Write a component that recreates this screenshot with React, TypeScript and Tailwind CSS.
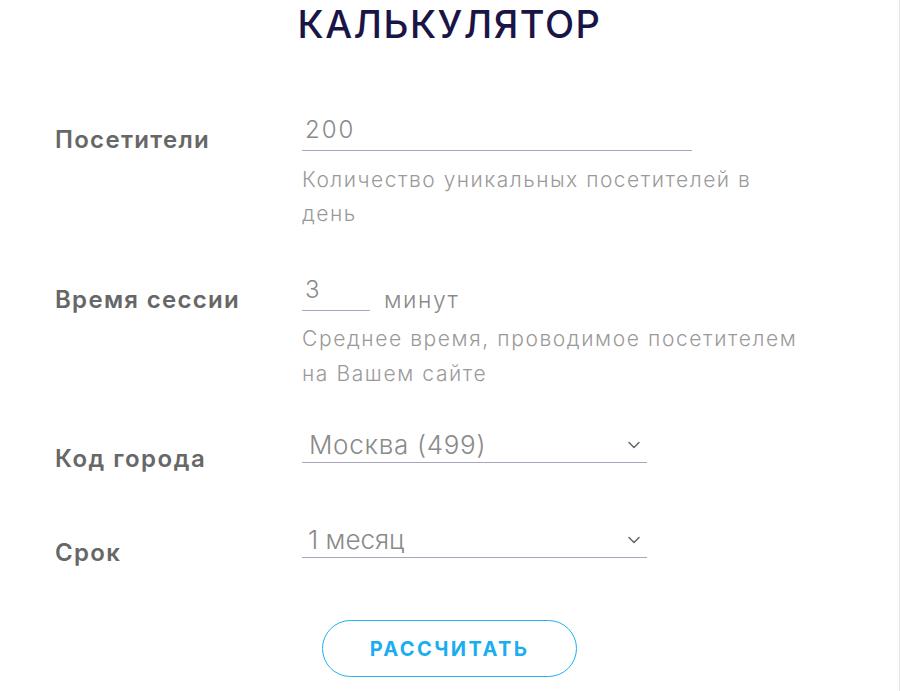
import React from 'react';
import { ChevronDown } from 'lucide-react';

const font = { fontFamily: 'Inter, "Noto Sans", sans-serif' };

const App: React.FC = () => {
  return (
    <div className="min-h-[691px] w-[900px] bg-white border-r border-[#e6e6e6]" style={font}>
      {/* Title */}
      <h1 className="text-center text-[38px] leading-[48px] font-medium tracking-[1.5px] text-[#1b1547]">
        КАЛЬКУЛЯТОР
      </h1>

      <div className="pl-[55px] pt-[62px]">
        {/* Посетители */}
        <div className="flex items-start">
          <div className="w-[247px] mt-[15px] text-[24px] leading-[30px] font-semibold tracking-[1.3px] text-[#676767]">
            Посетители
          </div>
          <div className="flex flex-col">
            <div className="w-[390px] h-[41px] border-b border-[#a9a5bd] text-[24px] leading-[40px] font-light tracking-[2px] text-[#8a8a8a] pl-[3px]">
              200
            </div>
            <p className="mt-[12px] w-[495px] text-[21px] leading-[34px] font-light tracking-[1.5px] text-[#9a9a9a]">
              Количество уникальных посетителей в день
            </p>
          </div>
        </div>

        {/* Время сессии */}
        <div className="flex items-start mt-[39px]">
          <div className="w-[247px] mt-[15px] text-[24px] leading-[30px] font-semibold tracking-[1.3px] text-[#676767]">
            Время сессии
          </div>
          <div className="flex flex-col">
            <div className="flex items-start">
              <div className="w-[68px] h-[41px] border-b border-[#a9a5bd] text-[24px] leading-[40px] font-light text-[#8a8a8a] pl-[3px]">
                3
              </div>
              <span className="ml-[14px] mt-[19px] text-[23px] leading-[22px] font-light tracking-[1.5px] text-[#8a8a8a]">
                минут
              </span>
            </div>
            <p className="mt-[10px] w-[525px] text-[21px] leading-[35px] font-light tracking-[1.6px] text-[#9a9a9a]">
              Среднее время, проводимое посетителем на Вашем сайте
            </p>
          </div>
        </div>

        {/* Код города */}
        <div className="flex items-start mt-[37px]">
          <div className="w-[247px] mt-[16px] text-[24px] leading-[30px] font-semibold tracking-[1.5px] text-[#676767]">
            Код города
          </div>
          <div className="w-[345px] h-[35px] border-b border-[#a9a5bd] flex items-center justify-between pl-[7px] pr-[3px]">
            <span className="text-[26px] leading-[34px] font-light tracking-[0.7px] text-[#8a8a8a]">
              Москва (499)
            </span>
            <ChevronDown size={20} strokeWidth={1.8} className="text-[#666]" />
          </div>
        </div>

        {/* Срок */}
        <div className="flex items-start mt-[49px]">
          <div className="w-[247px] mt-[15px] text-[24px] leading-[30px] font-semibold tracking-[1.3px] text-[#676767]">
            Срок
          </div>
          <div className="w-[345px] h-[35px] border-b border-[#a9a5bd] flex items-center justify-between pl-[6px] pr-[3px]">
            <span className="text-[26px] leading-[34px] font-light text-[#8a8a8a]">1 месяц</span>
            <ChevronDown size={20} strokeWidth={1.8} className="text-[#666]" />
          </div>
        </div>
      </div>

      <div className="flex justify-center mt-[52px]">
        <button className="w-[255px] h-[57px] rounded-full border border-[#1fb0f0] text-[20px] font-bold tracking-[2.4px] text-[#1aaef0]">
          РАССЧИТАТЬ
        </button>
      </div>
    </div>
  );
};

export default App;
